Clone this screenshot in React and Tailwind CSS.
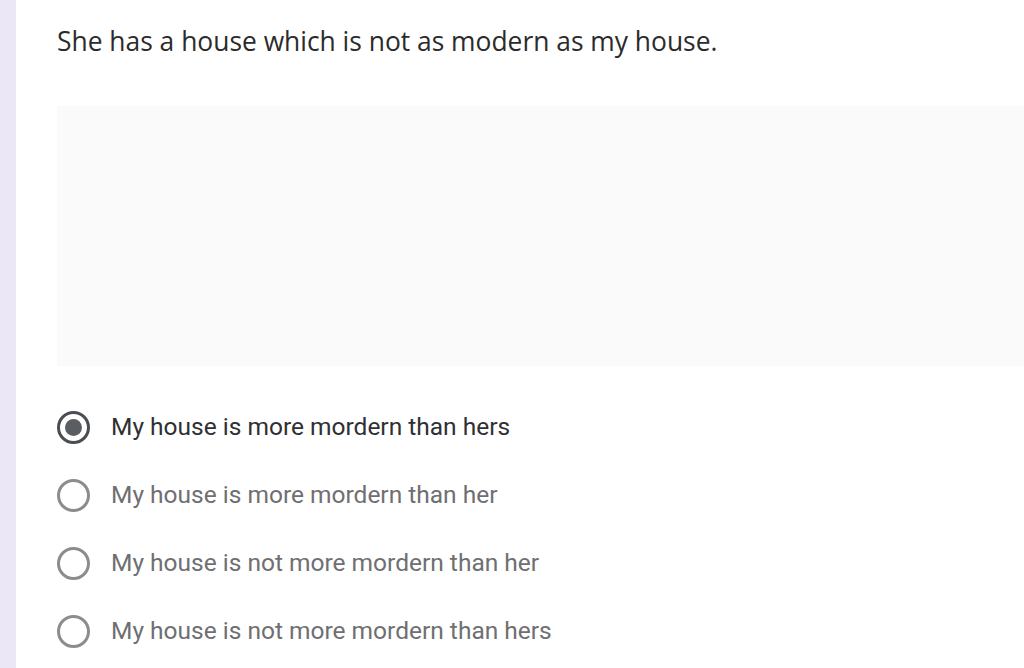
import React, { useState } from "react";

const opciones = [
  "My house is more mordern than hers",
  "My house is more mordern than her",
  "My house is not more mordern than her",
  "My house is not more mordern than hers",
];

const Radio = ({ checked }) => (
  <span
    className={`flex h-[33px] w-[33px] shrink-0 items-center justify-center rounded-full border-[3px] ${
      checked ? "border-[#4a4d52]" : "border-[#8c8c8c]"
    }`}
  >
    {checked && <span className="h-[17px] w-[17px] rounded-full bg-[#5a5d62]" />}
  </span>
);

export default function App() {
  const [elegida, setElegida] = useState(0);

  return (
    <div className="flex h-[668px] w-[1024px] overflow-hidden bg-white">
      <div className="w-[16px] shrink-0 bg-[#ebe7f7]" />
      <div className="flex flex-1 flex-col pl-[41px] pt-[23px]">
        <h2
          className="text-[26.4px] leading-[36px] text-[#2b2b2b]"
          style={{ fontFamily: '"Open Sans", sans-serif' }}
        >
          She has a house which is not as modern as my house.
        </h2>

        <div className="mt-[47px] h-[260px] bg-[#fafafa]" />

        <div
          className="mt-[45px] flex flex-col gap-[35px]"
          style={{ fontFamily: "Roboto, sans-serif" }}
        >
          {opciones.map((texto, i) => (
            <label
              key={i}
              onClick={() => setElegida(i)}
              className="flex h-[33px] cursor-pointer items-center gap-[21px]"
            >
              <Radio checked={elegida === i} />
              <span
                className={`text-[24.5px] ${
                  elegida === i ? "text-[#2f3033]" : "text-[#6f6f72]"
                }`}
              >
                {texto}
              </span>
            </label>
          ))}
        </div>
      </div>
    </div>
  );
}
